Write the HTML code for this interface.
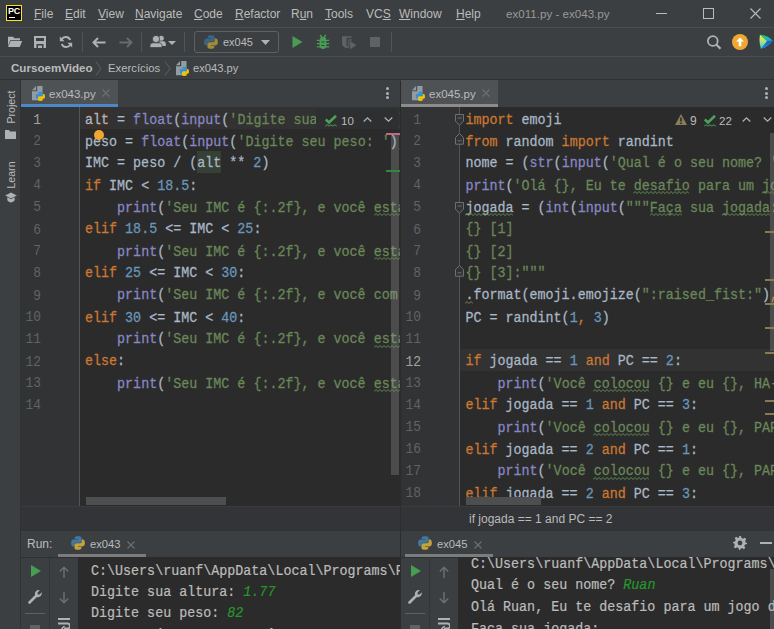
<!DOCTYPE html>
<html><head><meta charset="utf-8">
<style>
*{margin:0;padding:0;box-sizing:border-box}
html,body{width:774px;height:629px;overflow:hidden;background:#3c3f41;font-family:"Liberation Sans",sans-serif;}
.a{position:absolute}
.ui{font-family:"Liberation Sans",sans-serif;font-size:12px;color:#bbbbbb;white-space:nowrap}
.mono{-webkit-text-stroke:0.25px currentColor;font-family:"Liberation Mono",monospace;font-size:13.37px;white-space:pre;line-height:19.643px;transform:scaleY(1.12);transform-origin:0 0}
.ln{font-family:"Liberation Mono",monospace;font-size:12.9px;color:#606366;text-align:right;line-height:19.643px;transform:scaleY(1.12);transform-origin:0 0;padding-top:1.5px}
.menu{line-height:14px}.menu u{text-decoration:underline;text-underline-offset:1px}
.mono2{-webkit-text-stroke:0.2px currentColor;font-family:"Liberation Mono",monospace;font-size:13.37px;white-space:pre;color:#bbbbbb}.mono2 i{color:#26982b}
.k{color:#cc7832}.b{color:#8888c6}.s{color:#6a8759}.n{color:#6897bb}.i{color:#a9b7c6}
</style></head><body>
<!-- title bar -->
<div class="a" style="left:0;top:0;width:774px;height:27px;background:#3c3f41"></div>
<div class="a" style="left:6px;top:5px;width:16px;height:16px;background:#000;border:1px solid #f5e52b"></div>
<div class="a" style="left:8px;top:6px;font:bold 9px 'Liberation Sans';color:#fff;letter-spacing:-0.3px">PC</div>
<div class="a" style="left:9px;top:17px;width:6px;height:1px;background:#fff"></div>
<div class="a ui menu" style="top:7px;left:34px"><u>F</u>ile</div>
<div class="a ui menu" style="top:7px;left:65px"><u>E</u>dit</div>
<div class="a ui menu" style="top:7px;left:98px"><u>V</u>iew</div>
<div class="a ui menu" style="top:7px;left:135px"><u>N</u>avigate</div>
<div class="a ui menu" style="top:7px;left:194px"><u>C</u>ode</div>
<div class="a ui menu" style="top:7px;left:235px"><u>R</u>efactor</div>
<div class="a ui menu" style="top:7px;left:291px">R<u>u</u>n</div>
<div class="a ui menu" style="top:7px;left:325px"><u>T</u>ools</div>
<div class="a ui menu" style="top:7px;left:366px">VC<u>S</u></div>
<div class="a ui menu" style="top:7px;left:399px"><u>W</u>indow</div>
<div class="a ui menu" style="top:7px;left:456px"><u>H</u>elp</div>
<div class="a ui" style="top:7px;left:506px;color:#999999;font-size:11.6px">ex011.py - ex043.py</div>
<div class="a" style="left:656px;top:13px;width:11px;height:1px;background:#bbbbbb"></div>
<div class="a" style="left:703px;top:8px;width:11px;height:11px;border:1px solid #bbbbbb"></div>
<svg class="a" style="left:750px;top:8px" width="11" height="11"><path d="M0.5 0.5L10.5 10.5M10.5 0.5L0.5 10.5" stroke="#bbbbbb" stroke-width="1.1"/></svg>
<div class="a" style="left:0;top:27px;width:774px;height:1px;background:#4b4d4f"></div>
<!-- toolbar -->
<svg class="a" style="left:8px;top:36px" width="15" height="12" viewBox="0 0 15 12"><path d="M0 0.7H5L6.5 2.3H12V4.3H2.3L0 10Z" fill="#afb1b3"/><path d="M2.6 4.9H14.2L11.7 11H0Z" fill="#afb1b3"/></svg>
<svg class="a" style="left:34px;top:36px" width="12" height="12" viewBox="0 0 12 12"><path fill-rule="evenodd" d="M0 0H12V12H0ZM2 2V5H10V2ZM2.5 8V12H4V9.5H8V12H9.5V8Z" fill="#afb1b3"/></svg>
<svg class="a" style="left:59px;top:35px" width="14" height="14" viewBox="0 0 14 14"><path d="M11.2 5A4.8 4.8 0 0 0 2.6 4.2" fill="none" stroke="#afb1b3" stroke-width="2"/><path d="M2.8 9A4.8 4.8 0 0 0 11.4 9.8" fill="none" stroke="#afb1b3" stroke-width="2"/><path d="M0.8 1.5V6.3H5.6Z" fill="#afb1b3"/><path d="M13.2 12.5V7.7H8.4Z" fill="#afb1b3"/></svg>
<div class="a" style="left:82px;top:32px;width:1px;height:20px;background:#515354"></div>
<svg class="a" style="left:92px;top:37px" width="14" height="11" viewBox="0 0 14 11"><path d="M13.5 5.5H2M6 1L1.5 5.5L6 10" fill="none" stroke="#afb1b3" stroke-width="2"/></svg>
<svg class="a" style="left:119px;top:37px" width="14" height="11" viewBox="0 0 14 11"><path d="M0.5 5.5H12M8 1L12.5 5.5L8 10" fill="none" stroke="#686a6c" stroke-width="2"/></svg>
<div class="a" style="left:141px;top:32px;width:1px;height:20px;background:#515354"></div>
<svg class="a" style="left:150px;top:35px" width="16" height="13" viewBox="0 0 16 13"><circle cx="11.3" cy="3.3" r="2.5" fill="#afb1b3"/><path d="M9 6.3H13.5C15 6.3 15.8 7.6 15.8 9V11H11Z" fill="#afb1b3"/><circle cx="6" cy="4" r="3.6" fill="#afb1b3" stroke="#3c3f41" stroke-width="0.8"/><path d="M0 12.6V10.6C0 9 1.3 7.8 3 7.8H9C10.7 7.8 12 9 12 10.6V12.6Z" fill="#afb1b3" stroke="#3c3f41" stroke-width="0.8"/></svg>
<svg class="a" style="left:168px;top:41px" width="8" height="4" viewBox="0 0 8 4"><path d="M0 0H8L4 4Z" fill="#afb1b3"/></svg>
<div class="a" style="left:184px;top:32px;width:1px;height:20px;background:#515354"></div>
<div class="a" style="left:194px;top:31px;width:85px;height:22px;border:1px solid #5e6163;border-radius:3px"></div>
<svg class="a" style="left:203px;top:34px" width="16" height="16" viewBox="0 0 14 14"><path d="M7 1C4 1 4.2 2.3 4.2 2.3V3.6H7.1V4H3C3 4 1 3.8 1 6.9S2.7 10 2.7 10H3.8V8.5S3.7 6.8 5.5 6.8H8.5S10.2 6.8 10.2 5.2V2.6S10.4 1 7 1Z" fill="#3b6683"/><path d="M7.1 13C10.1 13 9.9 11.7 9.9 11.7V10.4H7V10H11.1C11.1 10 13 10.2 13 7.1S11.4 4 11.4 4H10.3V5.5S10.4 7.2 8.6 7.2H5.6S3.9 7.2 3.9 8.8V11.4S3.7 13 7.1 13Z" fill="#a18a3c"/></svg>
<div class="a ui" style="left:223px;top:35px;font-size:11px;line-height:14px">ex045</div>
<svg class="a" style="left:261px;top:40px" width="9" height="5" viewBox="0 0 9 5"><path d="M0 0H9L4.5 5Z" fill="#afb1b3"/></svg>
<svg class="a" style="left:292px;top:36px" width="11" height="12" viewBox="0 0 11 12"><path d="M0.5 0V12L10.5 6Z" fill="#499c54"/></svg>
<svg class="a" style="left:316px;top:34px" width="14" height="16" viewBox="0 0 14 16"><path d="M4.2 1L6.3 4M9.8 1L7.7 4" stroke="#499c54" stroke-width="1.4"/><ellipse cx="7" cy="5" rx="3" ry="1.9" fill="#499c54"/><path fill="#499c54" fill-rule="evenodd" d="M3.6 5.8H10.4V11.5C10.4 13.8 9 15 7 15S3.6 13.8 3.6 11.5ZM5.4 7.6V8.6H8.6V7.6ZM5.4 10.9V11.9H8.6V10.9Z"/><path d="M0.8 6.3H13.2M0.8 9.7H13.2M0.8 12.8H13.2" stroke="#499c54" stroke-width="1.3"/></svg>
<svg class="a" style="left:341px;top:36px" width="16" height="14" viewBox="0 0 16 14"><path d="M1 0.2H10.5V7.5C10.5 10 8.5 11.5 6 12.2C3 11.5 1 10 1 7.5Z" fill="#5f6163"/><path d="M5.6 1.8H10.5V3.2H7.2V10.2H5.6Z" fill="#3c3f41"/><path d="M8.6 4.4L16 9.2L8.6 14Z" fill="#5f6163" stroke="#3c3f41" stroke-width="0.7"/></svg>
<div class="a" style="left:370px;top:37px;width:10px;height:10px;background:#5f6163"></div>
<div class="a" style="left:391px;top:32px;width:1px;height:20px;background:#515354"></div>
<svg class="a" style="left:705px;top:34px" width="17" height="16" viewBox="0 0 17 16"><circle cx="7.8" cy="7" r="4.9" fill="none" stroke="#afb1b3" stroke-width="1.8"/><path d="M11.3 10.5L15.5 14.7" stroke="#afb1b3" stroke-width="2.2"/></svg>
<svg class="a" style="left:732px;top:34px" width="16" height="16" viewBox="0 0 16 16"><circle cx="8" cy="8" r="8" fill="#f0a732"/><path d="M8 3.5L12 7.5H9.3V12.3H6.7V7.5H4Z" fill="#fff"/></svg>
<svg class="a" style="left:758px;top:34px" width="16" height="16" viewBox="0 0 16 16"><defs><linearGradient id="gL" x1="0" y1="0" x2="0" y2="1"><stop offset="0" stop-color="#f2f23c"/><stop offset="0.55" stop-color="#9ee08a"/><stop offset="1" stop-color="#1ccfe8"/></linearGradient><linearGradient id="gT" x1="0" y1="0" x2="1" y2="1"><stop offset="0" stop-color="#2fd36a"/><stop offset="1" stop-color="#17a5e6"/></linearGradient><linearGradient id="gB" x1="0" y1="0" x2="0" y2="1"><stop offset="0" stop-color="#1d5fc8"/><stop offset="1" stop-color="#1d8fe0"/></linearGradient></defs><path d="M2 0.8L9.2 7L3 14.9Q0.6 8 2 0.8Z" fill="url(#gL)"/><path d="M2 0.8Q10 1.8 15 6.7L9.2 7Z" fill="url(#gT)"/><path d="M15 6.7Q11 12.5 3 14.9L9.2 7Z" fill="url(#gB)"/></svg>
<!-- nav bar -->
<div class="a ui" style="left:11px;top:61px;font-weight:bold;font-size:11.6px;line-height:14px;color:#bbbbbb">CursoemVideo</div>
<svg class="a" style="left:95px;top:61px" width="7" height="15" viewBox="0 0 7 15"><path d="M0.8 0.5L6 7.5L0.8 14.5" fill="none" stroke="#5e6163" stroke-width="1"/></svg>
<div class="a ui" style="left:108px;top:61px;font-size:11.3px;line-height:14px">Exercícios</div>
<svg class="a" style="left:164px;top:61px" width="7" height="15" viewBox="0 0 7 15"><path d="M0.8 0.5L6 7.5L0.8 14.5" fill="none" stroke="#5e6163" stroke-width="1"/></svg>
<svg class="a" style="left:176px;top:61px" width="16" height="16" viewBox="0 0 16 16"><path d="M0 4.2L4 0V4.2Z" fill="#919ca4"/><path d="M5.2 0H10.5V14.2H0V5.3H5.2Z" fill="#919ca4"/><g transform="translate(3.03 5.03) scale(0.767)"><path d="M7 1C4 1 4.2 2.3 4.2 2.3V3.6H7.1V4H3C3 4 1 3.8 1 6.9S2.7 10 2.7 10H3.8V8.5S3.7 6.8 5.5 6.8H8.5S10.2 6.8 10.2 5.2V2.6S10.4 1 7 1Z" fill="#3592d0"/><path d="M7.1 13C10.1 13 9.9 11.7 9.9 11.7V10.4H7V10H11.1C11.1 10 13 10.2 13 7.1S11.4 4 11.4 4H10.3V5.5S10.4 7.2 8.6 7.2H5.6S3.9 7.2 3.9 8.8V11.4S3.7 13 7.1 13Z" fill="#f3c300"/></g></svg>
<div class="a ui" style="left:193px;top:61px;font-size:11.2px;line-height:14px">ex043.py</div>
<div class="a" style="left:0;top:56px;width:774px;height:1px;background:#4b4d4f"></div>
<!-- nav bar -->
<div class="a" style="left:0;top:79px;width:774px;height:1px;background:#2f3133"></div>
<!-- left strip -->
<div class="a" style="left:20px;top:81px;width:1px;height:548px;background:#323232"></div>
<!-- left editor tabs -->
<div class="a" style="left:21px;top:80px;width:97px;height:26px;background:#4e5254"></div>
<div class="a" style="left:21px;top:104px;width:97px;height:3px;background:#4a88c7"></div>
<!-- left editor -->
<div class="a" style="left:21px;top:107px;width:379px;height:399px;background:#2b2b2b"></div>
<div class="a" style="left:21px;top:107px;width:58px;height:399px;background:#313335"></div>
<div class="a" style="left:79px;top:107px;width:1px;height:399px;background:#555555"></div>
<div class="a" style="left:80px;top:107px;width:320px;height:22px;background:#323232"></div>
<!-- divider -->
<div class="a" style="left:400px;top:81px;width:1px;height:449px;background:#2b2b2b"></div>
<!-- right editor tabs -->
<div class="a" style="left:401px;top:80px;width:97px;height:26px;background:#4e5254"></div>
<div class="a" style="left:401px;top:104px;width:97px;height:3px;background:#8c8c8c"></div>
<!-- right editor -->
<div class="a" style="left:401px;top:107px;width:373px;height:399px;background:#2b2b2b"></div>
<div class="a" style="left:401px;top:107px;width:58px;height:399px;background:#313335"></div>
<div class="a" style="left:459px;top:107px;width:1px;height:399px;background:#555555"></div>
<div class="a" style="left:460px;top:349px;width:314px;height:22px;background:#323232"></div>
<!-- status strip -->
<div class="a" style="left:21px;top:506px;width:753px;height:24px;background:#323437"></div>
<div class="a" style="left:21px;top:506px;width:753px;height:1px;background:#393b3d"></div>
<div class="a" style="left:400px;top:506px;width:1px;height:24px;background:#2b2d2f"></div>
<!-- run panel -->
<div class="a" style="left:21px;top:530px;width:753px;height:1px;background:#323232"></div>
<div class="a" style="left:78px;top:557px;width:322px;height:72px;background:#2b2b2b"></div>
<div class="a" style="left:458px;top:557px;width:316px;height:72px;background:#2b2b2b"></div>
<div class="a" style="left:400px;top:530px;width:1px;height:99px;background:#2b2d2f"></div>
<!-- code -->
<div class="a" style="left:21px;top:107px;width:20px;height:399px"><div class="ln">
<div style="color:#a4a3a3">1</div><div>2</div><div>3</div><div>4</div><div>5</div><div>6</div><div>7</div><div>8</div><div>9</div><div>10</div><div>11</div><div>12</div><div>13</div><div>14</div></div></div>
<div class="a" style="left:80px;top:107px;width:320px;height:399px;overflow:hidden">
<div class="a" style="left:85px;top:0;width:4px;height:22px;background:#3b3029;left:5px;width:24px"></div>
<div class="a" style="left:117px;top:44px;width:24px;height:22px;background:#344134"></div>
<div class="a mono" style="left:5px;top:1.5px"><span class="i">alt = </span><span class="b">float</span><span class="i">(</span><span class="b">input</span><span class="i">(</span><span class="s">&#x27;Digite sua altura: &#x27;</span><span class="i">))</span>
<span class="i">peso = </span><span class="b">float</span><span class="i">(</span><span class="b">input</span><span class="i">(</span><span class="s">&#x27;Digite seu peso: &#x27;</span><span class="i">))</span>
<span class="i">IMC = peso / (alt ** </span><span class="n">2</span><span class="i">)</span>
<span class="k">if </span><span class="i">IMC &lt; </span><span class="n">18.5</span><span class="i">:</span>
<span class="i">    </span><span class="b">print</span><span class="i">(</span><span class="s">&#x27;Seu IMC é {:.2f}, e você esta abaixo do peso&#x27;</span><span class="i">)</span>
<span class="k">elif </span><span class="n">18.5</span><span class="i"> &lt;= IMC &lt; </span><span class="n">25</span><span class="i">:</span>
<span class="i">    </span><span class="b">print</span><span class="i">(</span><span class="s">&#x27;Seu IMC é {:.2f}, e você esta no peso ideal&#x27;</span><span class="i">)</span>
<span class="k">elif </span><span class="n">25</span><span class="i"> &lt;= IMC &lt; </span><span class="n">30</span><span class="i">:</span>
<span class="i">    </span><span class="b">print</span><span class="i">(</span><span class="s">&#x27;Seu IMC é {:.2f}, e você com sobrepeso&#x27;</span><span class="i">)</span>
<span class="k">elif </span><span class="n">30</span><span class="i"> &lt;= IMC &lt; </span><span class="n">40</span><span class="i">:</span>
<span class="i">    </span><span class="b">print</span><span class="i">(</span><span class="s">&#x27;Seu IMC é {:.2f}, e você esta obeso&#x27;</span><span class="i">)</span>
<span class="k">else</span><span class="i">:</span>
<span class="i">    </span><span class="b">print</span><span class="i">(</span><span class="s">&#x27;Seu IMC é {:.2f}, e você esta com obesidade&#x27;</span><span class="i">)</span>
</div></div>
<div class="a" style="left:401px;top:107px;width:20px;height:399px"><div class="ln">
<div>1</div><div>2</div><div>3</div><div>4</div><div>5</div><div>6</div><div>7</div><div>8</div><div>9</div><div>10</div><div>11</div><div style="color:#a4a3a3">12</div><div>13</div><div>14</div><div>15</div><div>16</div><div>17</div><div>18</div></div></div>
<div class="a" style="left:460px;top:107px;width:314px;height:399px;overflow:hidden">
<div class="a mono" style="left:5.4px;top:1.5px"><span class="k">import </span><span class="i">emoji</span>
<span class="k">from </span><span class="i">random </span><span class="k">import </span><span class="i">randint</span>
<span class="i">nome = (</span><span class="b">str</span><span class="i">(</span><span class="b">input</span><span class="i">(</span><span class="s">&#x27;Qual é o seu nome? &#x27;</span><span class="i">)))</span>
<span class="b">print</span><span class="i">(</span><span class="s">&#x27;Olá {}, Eu te desafio para um jogo&#x27;</span><span class="i">)</span>
<span class="i">jogada = (</span><span class="b">int</span><span class="i">(</span><span class="b">input</span><span class="i">(</span><span class="s">&quot;&quot;&quot;Faça sua jogada:</span>
<span class="s">{} [1]</span>
<span class="s">{} [2]</span>
<span class="s">{} [3]:&quot;&quot;&quot;</span>
<span class="i">.format(emoji.emojize(</span><span class="s">&quot;:raised_fist:&quot;</span><span class="i">)</span><span class="k">,</span><span class="i"> emoji</span>
<span class="i">PC = randint(</span><span class="n">1</span><span class="k">,</span><span class="i"> </span><span class="n">3</span><span class="i">)</span>

<span class="k">if </span><span class="i">jogada == </span><span class="n">1</span><span class="k"> and </span><span class="i">PC == </span><span class="n">2</span><span class="i">:</span>
<span class="i">    </span><span class="b">print</span><span class="i">(</span><span class="s">&#x27;Você colocou {} e eu {}, HA-HA&#x27;</span><span class="i">)</span>
<span class="k">elif </span><span class="i">jogada == </span><span class="n">1</span><span class="k"> and </span><span class="i">PC == </span><span class="n">3</span><span class="i">:</span>
<span class="i">    </span><span class="b">print</span><span class="i">(</span><span class="s">&#x27;Você colocou {} e eu {}, PAREDE&#x27;</span><span class="i">)</span>
<span class="k">elif </span><span class="i">jogada == </span><span class="n">2</span><span class="k"> and </span><span class="i">PC == </span><span class="n">1</span><span class="i">:</span>
<span class="i">    </span><span class="b">print</span><span class="i">(</span><span class="s">&#x27;Você colocou {} e eu {}, PAREDE&#x27;</span><span class="i">)</span>
<span class="k">elif </span><span class="i">jogada == </span><span class="n">2</span><span class="k"> and </span><span class="i">PC == </span><span class="n">3</span><span class="i">:</span></div></div>
<div class="a ui" style="left:-6px;top:101px;width:34px;text-align:center;font-size:10.6px;line-height:12px;transform:rotate(-90deg)">Project</div>
<svg class="a" style="left:5px;top:130px" width="11" height="9" viewBox="0 0 11 9"><path d="M0 0H4L5 1.5H11V9H0Z" fill="#afb1b3"/></svg>
<div class="a ui" style="left:-6px;top:168.5px;width:34px;text-align:center;font-size:10.6px;line-height:12px;transform:rotate(-90deg)">Learn</div>
<svg class="a" style="left:5px;top:192px" width="12" height="11" viewBox="0 0 12 11"><path d="M6 0.5L11.8 3.5L6 6.5L0.2 3.5Z" fill="#afb1b3"/><path d="M2.3 5.2V8C2.3 8 3.6 10.5 6 10.5S9.7 8 9.7 8V5.2L6 7.2Z" fill="#afb1b3"/></svg>
<svg class="a" style="left:32px;top:86px" width="16" height="16" viewBox="0 0 16 16"><path d="M0 4.2L4 0V4.2Z" fill="#919ca4"/><path d="M5.2 0H10.5V14.2H0V5.3H5.2Z" fill="#919ca4"/><g transform="translate(3.03 5.03) scale(0.767)"><path d="M7 1C4 1 4.2 2.3 4.2 2.3V3.6H7.1V4H3C3 4 1 3.8 1 6.9S2.7 10 2.7 10H3.8V8.5S3.7 6.8 5.5 6.8H8.5S10.2 6.8 10.2 5.2V2.6S10.4 1 7 1Z" fill="#3592d0"/><path d="M7.1 13C10.1 13 9.9 11.7 9.9 11.7V10.4H7V10H11.1C11.1 10 13 10.2 13 7.1S11.4 4 11.4 4H10.3V5.5S10.4 7.2 8.6 7.2H5.6S3.9 7.2 3.9 8.8V11.4S3.7 13 7.1 13Z" fill="#f3c300"/></g></svg>
<div class="a ui" style="left:49px;top:87px;font-size:11.5px;line-height:14px;color:#bbbbbb">ex043.py</div>
<svg class="a" style="left:102px;top:89px" width="8" height="8" viewBox="0 0 8 8"><path d="M0.5 0.5L7.5 7.5M7.5 0.5L0.5 7.5" stroke="#6e7173" stroke-width="1.1"/></svg>
<div class="a" style="left:386px;top:87.0px;width:3px;height:3px;border-radius:50%;background:#afb1b3"></div><div class="a" style="left:386px;top:91.5px;width:3px;height:3px;border-radius:50%;background:#afb1b3"></div><div class="a" style="left:386px;top:96.0px;width:3px;height:3px;border-radius:50%;background:#afb1b3"></div>
<svg class="a" style="left:412px;top:86px" width="16" height="16" viewBox="0 0 16 16"><path d="M0 4.2L4 0V4.2Z" fill="#919ca4"/><path d="M5.2 0H10.5V14.2H0V5.3H5.2Z" fill="#919ca4"/><g transform="translate(3.03 5.03) scale(0.767)"><path d="M7 1C4 1 4.2 2.3 4.2 2.3V3.6H7.1V4H3C3 4 1 3.8 1 6.9S2.7 10 2.7 10H3.8V8.5S3.7 6.8 5.5 6.8H8.5S10.2 6.8 10.2 5.2V2.6S10.4 1 7 1Z" fill="#3592d0"/><path d="M7.1 13C10.1 13 9.9 11.7 9.9 11.7V10.4H7V10H11.1C11.1 10 13 10.2 13 7.1S11.4 4 11.4 4H10.3V5.5S10.4 7.2 8.6 7.2H5.6S3.9 7.2 3.9 8.8V11.4S3.7 13 7.1 13Z" fill="#f3c300"/></g></svg>
<div class="a ui" style="left:429px;top:87px;font-size:11.5px;line-height:14px;color:#bbbbbb">ex045.py</div>
<svg class="a" style="left:482px;top:89px" width="8" height="8" viewBox="0 0 8 8"><path d="M0.5 0.5L7.5 7.5M7.5 0.5L0.5 7.5" stroke="#6e7173" stroke-width="1.1"/></svg>
<div class="a" style="left:765px;top:87.0px;width:3px;height:3px;border-radius:50%;background:#afb1b3"></div><div class="a" style="left:765px;top:91.5px;width:3px;height:3px;border-radius:50%;background:#afb1b3"></div><div class="a" style="left:765px;top:96.0px;width:3px;height:3px;border-radius:50%;background:#afb1b3"></div>
<div class="a" style="left:316px;top:109px;width:82px;height:20px;background:#2e2f30;border-radius:4px"></div>
<svg class="a" style="left:325px;top:115px" width="12" height="13" viewBox="0 0 12 13"><path d="M0.8 4.5L4 7.5L11 0.8" fill="none" stroke="#4fa05a" stroke-width="2.6"/><path d="M0.3 11.2L2.2 9.7L4.1 11.2L6 9.7L7.9 11.2L9.8 9.7L11.7 11.2" fill="none" stroke="#4fa05a" stroke-width="1"/></svg>
<div class="a ui" style="left:341px;top:114px;font-size:11.5px;line-height:14px;color:#bbbbbb">10</div>
<svg class="a" style="left:363px;top:117px" width="9" height="5" viewBox="0 0 9 5"><path d="M0.7 4.5L4.5 0.9L8.3 4.5" fill="none" stroke="#afb1b3" stroke-width="1.3"/></svg>
<svg class="a" style="left:384px;top:117px" width="9" height="5" viewBox="0 0 9 5"><path d="M0.7 0.5L4.5 4.1L8.3 0.5" fill="none" stroke="#afb1b3" stroke-width="1.3"/></svg>
<div class="a" style="left:391px;top:133px;width:8px;height:342px;background:rgba(160,160,160,0.28)"></div>
<div class="a" style="left:386px;top:133px;width:14px;height:2px;background:#c26a7f"></div>
<div class="a" style="left:386px;top:170px;width:14px;height:2px;background:#2f8a3a"></div>
<div class="a" style="left:86px;top:497px;width:140px;height:8px;background:#4c4e50"></div>
<div class="a" style="left:94px;top:129.5px;width:10px;height:10px;border-radius:50%;background:#f0a732"></div>
<svg class="a" style="left:675px;top:114px" width="12" height="11" viewBox="0 0 12 11"><path d="M6 0L12 11H0Z" fill="#8a7d5c"/><path d="M5.2 3.5H6.8V7.5H5.2ZM5.2 8.5H6.8V10H5.2Z" fill="#2b2b2b"/></svg>
<div class="a ui" style="left:690px;top:114px;font-size:12px;line-height:14px;color:#bbbbbb">9</div>
<svg class="a" style="left:704px;top:115px" width="12" height="13" viewBox="0 0 12 13"><path d="M0.8 4.5L4 7.5L11 0.8" fill="none" stroke="#4fa05a" stroke-width="2.6"/><path d="M0.3 11.2L2.2 9.7L4.1 11.2L6 9.7L7.9 11.2L9.8 9.7L11.7 11.2" fill="none" stroke="#4fa05a" stroke-width="1"/></svg>
<div class="a ui" style="left:719px;top:114px;font-size:11.5px;line-height:14px;color:#bbbbbb">22</div>
<svg class="a" style="left:742px;top:117px" width="9" height="5" viewBox="0 0 9 5"><path d="M0.7 4.5L4.5 0.9L8.3 4.5" fill="none" stroke="#afb1b3" stroke-width="1.3"/></svg>
<svg class="a" style="left:763px;top:117px" width="9" height="5" viewBox="0 0 9 5"><path d="M0.7 0.5L4.5 4.1L8.3 0.5" fill="none" stroke="#afb1b3" stroke-width="1.3"/></svg>
<div class="a" style="left:770px;top:133px;width:4px;height:218px;background:rgba(160,160,160,0.28)"></div>
<div class="a" style="left:765px;top:231px;width:9px;height:2px;background:#8a7a52"></div>
<div class="a" style="left:765px;top:279px;width:9px;height:2px;background:#8a7a52"></div>
<div class="a" style="left:765px;top:303px;width:9px;height:2px;background:#8a7a52"></div>
<div class="a" style="left:765px;top:327px;width:9px;height:2px;background:#8a7a52"></div>
<div class="a" style="left:765px;top:352px;width:9px;height:2px;background:#8a7a52"></div>
<div class="a" style="left:765px;top:400px;width:9px;height:2px;background:#8a7a52"></div>
<div class="a" style="left:765px;top:413px;width:9px;height:2px;background:#8a7a52"></div>
<div class="a" style="left:466px;top:497px;width:75px;height:8px;background:#4c4e50"></div>
<svg class="a" style="left:455px;top:114px" width="9" height="12" viewBox="0 0 9 12"><path d="M0.5 0.5H8.5V7.2L4.5 11.2L0.5 7.2Z" fill="#313335" stroke="#6e7173" stroke-width="1"/><path d="M2.5 4H6.5" stroke="#6e7173"/></svg>
<svg class="a" style="left:455px;top:133px" width="9" height="12" viewBox="0 0 9 12"><path d="M0.5 11.2H8.5V4.5L4.5 0.5L0.5 4.5Z" fill="#313335" stroke="#6e7173" stroke-width="1"/><path d="M2.5 7.8H6.5" stroke="#6e7173"/></svg>
<svg class="a" style="left:455px;top:202px" width="9" height="12" viewBox="0 0 9 12"><path d="M0.5 0.5H8.5V7.2L4.5 11.2L0.5 7.2Z" fill="#313335" stroke="#6e7173" stroke-width="1"/><path d="M2.5 4H6.5" stroke="#6e7173"/></svg>
<svg class="a" style="left:455px;top:265px" width="9" height="12" viewBox="0 0 9 12"><path d="M0.5 11.2H8.5V4.5L4.5 0.5L0.5 4.5Z" fill="#313335" stroke="#6e7173" stroke-width="1"/><path d="M2.5 7.8H6.5" stroke="#6e7173"/></svg>
<svg class="a" style="left:373.9px;top:213px" width="26" height="4" viewBox="0 0 26 4"><path d="M0.0 2.6 L2.0 0.5 L4.0 2.6 L6.0 0.5 L8.0 2.6 L10.0 0.5 L12.0 2.6 L14.0 0.5 L16.0 2.6 L18.0 0.5 L20.0 2.6 L22.0 0.5 L24.0 2.6 L26.0 0.5" fill="none" stroke="#5f8a52" stroke-width="1"/></svg>
<svg class="a" style="left:373.9px;top:257px" width="26" height="4" viewBox="0 0 26 4"><path d="M0.0 2.6 L2.0 0.5 L4.0 2.6 L6.0 0.5 L8.0 2.6 L10.0 0.5 L12.0 2.6 L14.0 0.5 L16.0 2.6 L18.0 0.5 L20.0 2.6 L22.0 0.5 L24.0 2.6 L26.0 0.5" fill="none" stroke="#5f8a52" stroke-width="1"/></svg>
<svg class="a" style="left:373.9px;top:345px" width="26" height="4" viewBox="0 0 26 4"><path d="M0.0 2.6 L2.0 0.5 L4.0 2.6 L6.0 0.5 L8.0 2.6 L10.0 0.5 L12.0 2.6 L14.0 0.5 L16.0 2.6 L18.0 0.5 L20.0 2.6 L22.0 0.5 L24.0 2.6 L26.0 0.5" fill="none" stroke="#5f8a52" stroke-width="1"/></svg>
<svg class="a" style="left:373.9px;top:389px" width="26" height="4" viewBox="0 0 26 4"><path d="M0.0 2.6 L2.0 0.5 L4.0 2.6 L6.0 0.5 L8.0 2.6 L10.0 0.5 L12.0 2.6 L14.0 0.5 L16.0 2.6 L18.0 0.5 L20.0 2.6 L22.0 0.5 L24.0 2.6 L26.0 0.5" fill="none" stroke="#5f8a52" stroke-width="1"/></svg>
<svg class="a" style="left:633.4px;top:191px" width="56" height="4" viewBox="0 0 56 4"><path d="M0.0 2.6 L2.0 0.5 L4.0 2.6 L6.0 0.5 L8.0 2.6 L10.0 0.5 L12.0 2.6 L14.0 0.5 L16.0 2.6 L18.0 0.5 L20.0 2.6 L22.0 0.5 L24.0 2.6 L26.0 0.5 L28.0 2.6 L30.0 0.5 L32.0 2.6 L34.0 0.5 L36.0 2.6 L38.0 0.5 L40.0 2.6 L42.0 0.5 L44.0 2.6 L46.0 0.5 L48.0 2.6 L50.0 0.5 L52.0 2.6 L54.0 0.5 L56.0 2.6" fill="none" stroke="#5f8a52" stroke-width="1"/></svg>
<svg class="a" style="left:761.7px;top:191px" width="32" height="4" viewBox="0 0 32 4"><path d="M0.0 2.6 L2.0 0.5 L4.0 2.6 L6.0 0.5 L8.0 2.6 L10.0 0.5 L12.0 2.6 L14.0 0.5 L16.0 2.6 L18.0 0.5 L20.0 2.6 L22.0 0.5 L24.0 2.6 L26.0 0.5 L28.0 2.6 L30.0 0.5 L32.0 2.6" fill="none" stroke="#5f8a52" stroke-width="1"/></svg>
<svg class="a" style="left:465.0px;top:213px" width="48" height="4" viewBox="0 0 48 4"><path d="M0.0 2.6 L2.0 0.5 L4.0 2.6 L6.0 0.5 L8.0 2.6 L10.0 0.5 L12.0 2.6 L14.0 0.5 L16.0 2.6 L18.0 0.5 L20.0 2.6 L22.0 0.5 L24.0 2.6 L26.0 0.5 L28.0 2.6 L30.0 0.5 L32.0 2.6 L34.0 0.5 L36.0 2.6 L38.0 0.5 L40.0 2.6 L42.0 0.5 L44.0 2.6 L46.0 0.5 L48.0 2.6" fill="none" stroke="#5f8a52" stroke-width="1"/></svg>
<svg class="a" style="left:649.5px;top:213px" width="32" height="4" viewBox="0 0 32 4"><path d="M0.0 2.6 L2.0 0.5 L4.0 2.6 L6.0 0.5 L8.0 2.6 L10.0 0.5 L12.0 2.6 L14.0 0.5 L16.0 2.6 L18.0 0.5 L20.0 2.6 L22.0 0.5 L24.0 2.6 L26.0 0.5 L28.0 2.6 L30.0 0.5 L32.0 2.6" fill="none" stroke="#5f8a52" stroke-width="1"/></svg>
<svg class="a" style="left:721.6px;top:213px" width="48" height="4" viewBox="0 0 48 4"><path d="M0.0 2.6 L2.0 0.5 L4.0 2.6 L6.0 0.5 L8.0 2.6 L10.0 0.5 L12.0 2.6 L14.0 0.5 L16.0 2.6 L18.0 0.5 L20.0 2.6 L22.0 0.5 L24.0 2.6 L26.0 0.5 L28.0 2.6 L30.0 0.5 L32.0 2.6 L34.0 0.5 L36.0 2.6 L38.0 0.5 L40.0 2.6 L42.0 0.5 L44.0 2.6 L46.0 0.5 L48.0 2.6" fill="none" stroke="#5f8a52" stroke-width="1"/></svg>
<svg class="a" style="left:465.0px;top:301px" width="8" height="4" viewBox="0 0 8 4"><path d="M0.0 2.6 L2.0 0.5 L4.0 2.6 L6.0 0.5 L8.0 2.6" fill="none" stroke="#8a7a52" stroke-width="1"/></svg>
<svg class="a" style="left:593.3px;top:389px" width="56" height="4" viewBox="0 0 56 4"><path d="M0.0 2.6 L2.0 0.5 L4.0 2.6 L6.0 0.5 L8.0 2.6 L10.0 0.5 L12.0 2.6 L14.0 0.5 L16.0 2.6 L18.0 0.5 L20.0 2.6 L22.0 0.5 L24.0 2.6 L26.0 0.5 L28.0 2.6 L30.0 0.5 L32.0 2.6 L34.0 0.5 L36.0 2.6 L38.0 0.5 L40.0 2.6 L42.0 0.5 L44.0 2.6 L46.0 0.5 L48.0 2.6 L50.0 0.5 L52.0 2.6 L54.0 0.5 L56.0 2.6" fill="none" stroke="#5f8a52" stroke-width="1"/></svg>
<svg class="a" style="left:593.3px;top:433px" width="56" height="4" viewBox="0 0 56 4"><path d="M0.0 2.6 L2.0 0.5 L4.0 2.6 L6.0 0.5 L8.0 2.6 L10.0 0.5 L12.0 2.6 L14.0 0.5 L16.0 2.6 L18.0 0.5 L20.0 2.6 L22.0 0.5 L24.0 2.6 L26.0 0.5 L28.0 2.6 L30.0 0.5 L32.0 2.6 L34.0 0.5 L36.0 2.6 L38.0 0.5 L40.0 2.6 L42.0 0.5 L44.0 2.6 L46.0 0.5 L48.0 2.6 L50.0 0.5 L52.0 2.6 L54.0 0.5 L56.0 2.6" fill="none" stroke="#5f8a52" stroke-width="1"/></svg>
<svg class="a" style="left:593.3px;top:477px" width="56" height="4" viewBox="0 0 56 4"><path d="M0.0 2.6 L2.0 0.5 L4.0 2.6 L6.0 0.5 L8.0 2.6 L10.0 0.5 L12.0 2.6 L14.0 0.5 L16.0 2.6 L18.0 0.5 L20.0 2.6 L22.0 0.5 L24.0 2.6 L26.0 0.5 L28.0 2.6 L30.0 0.5 L32.0 2.6 L34.0 0.5 L36.0 2.6 L38.0 0.5 L40.0 2.6 L42.0 0.5 L44.0 2.6 L46.0 0.5 L48.0 2.6 L50.0 0.5 L52.0 2.6 L54.0 0.5 L56.0 2.6" fill="none" stroke="#5f8a52" stroke-width="1"/></svg>
<div class="a ui" style="left:469px;top:512px;font-size:12px;line-height:14px;color:#bbbbbb">if jogada == 1 and PC == 2</div>
<div class="a ui" style="left:27px;top:537px;font-size:12px;line-height:14px;color:#bbbbbb">Run:</div>
<svg class="a" style="left:70px;top:535px" width="16" height="16" viewBox="0 0 14 14"><path d="M7 1C4 1 4.2 2.3 4.2 2.3V3.6H7.1V4H3C3 4 1 3.8 1 6.9S2.7 10 2.7 10H3.8V8.5S3.7 6.8 5.5 6.8H8.5S10.2 6.8 10.2 5.2V2.6S10.4 1 7 1Z" fill="#3f79a3"/><path d="M7.1 13C10.1 13 9.9 11.7 9.9 11.7V10.4H7V10H11.1C11.1 10 13 10.2 13 7.1S11.4 4 11.4 4H10.3V5.5S10.4 7.2 8.6 7.2H5.6S3.9 7.2 3.9 8.8V11.4S3.7 13 7.1 13Z" fill="#c4a23c"/></svg>
<div class="a ui" style="left:90px;top:537px;font-size:11.2px;line-height:14px;color:#bbbbbb">ex043</div>
<svg class="a" style="left:127px;top:540.5px" width="8" height="8" viewBox="0 0 8 8"><path d="M0.5 0.5L7.5 7.5M7.5 0.5L0.5 7.5" stroke="#6e7173" stroke-width="1.1"/></svg>
<div class="a" style="left:58px;top:554px;width:88px;height:3px;background:#7a7c7e"></div>
<div class="a" style="left:49px;top:557px;width:1px;height:72px;background:#323435"></div>
<svg class="a" style="left:31px;top:565px" width="10" height="12" viewBox="0 0 10 12"><path d="M0 0V12L10 6Z" fill="#499c54"/></svg><svg class="a" style="left:28px;top:589px" width="15" height="15" viewBox="0 0 15 15"><path d="M1.5 13.5L8 7" stroke="#afb1b3" stroke-width="2.6" stroke-linecap="round"/><path d="M13.8 3.2L11.6 5.4L9.6 5.4L9.6 3.4L11.8 1.2A4 4 0 0 0 7 6.2L8.8 8A4 4 0 0 0 13.8 3.2Z" fill="#afb1b3"/></svg><div class="a" style="left:25px;top:613px;width:20px;height:1px;background:#5e6163"></div><div class="a" style="left:30px;top:625px;width:10px;height:10px;background:#5f6163"></div><svg class="a" style="left:59px;top:566px" width="10" height="12" viewBox="0 0 10 12"><path d="M5 12V1.5M0.8 5.5L5 1.3L9.2 5.5" fill="none" stroke="#6c6e70" stroke-width="1.5"/></svg><svg class="a" style="left:59px;top:592px" width="10" height="12" viewBox="0 0 10 12"><path d="M5 0V10.5M0.8 6.5L5 10.7L9.2 6.5" fill="none" stroke="#6c6e70" stroke-width="1.5"/></svg><svg class="a" style="left:58px;top:618px" width="12" height="11" viewBox="0 0 12 11"><path d="M0 1H12M0 5.5H9.5A2.5 2.5 0 0 1 9.5 10.5H6" fill="none" stroke="#afb1b3" stroke-width="1.8"/><path d="M6.5 8L4 10.5L6.5 13" fill="none" stroke="#afb1b3" stroke-width="1.5"/></svg>
<div class="a" style="left:21px;top:557px;width:57px;height:1px;background:#2e3032"></div><div class="a" style="left:401px;top:557px;width:57px;height:1px;background:#2e3032"></div>
<div class="a mono2" style="left:91px;top:557px;width:309px;height:72px;overflow:hidden"><div style="transform:scaleY(1.12);transform-origin:0 0;line-height:19.29px;padding-top:2.5px">C:\Users\ruanf\AppData\Local\Programs\Python
Digite sua altura: <i>1.77</i>
Digite seu peso: <i>82</i>
Seu IMC é 26.16, e você com sorepeso</div></div>
<svg class="a" style="left:417px;top:535px" width="16" height="16" viewBox="0 0 14 14"><path d="M7 1C4 1 4.2 2.3 4.2 2.3V3.6H7.1V4H3C3 4 1 3.8 1 6.9S2.7 10 2.7 10H3.8V8.5S3.7 6.8 5.5 6.8H8.5S10.2 6.8 10.2 5.2V2.6S10.4 1 7 1Z" fill="#3f79a3"/><path d="M7.1 13C10.1 13 9.9 11.7 9.9 11.7V10.4H7V10H11.1C11.1 10 13 10.2 13 7.1S11.4 4 11.4 4H10.3V5.5S10.4 7.2 8.6 7.2H5.6S3.9 7.2 3.9 8.8V11.4S3.7 13 7.1 13Z" fill="#c4a23c"/></svg>
<div class="a ui" style="left:437px;top:537px;font-size:11.2px;line-height:14px;color:#bbbbbb">ex045</div>
<svg class="a" style="left:474px;top:540.5px" width="8" height="8" viewBox="0 0 8 8"><path d="M0.5 0.5L7.5 7.5M7.5 0.5L0.5 7.5" stroke="#6e7173" stroke-width="1.1"/></svg>
<div class="a" style="left:405px;top:554px;width:88px;height:3px;background:#7a7c7e"></div>
<svg class="a" style="left:733px;top:536px" width="14" height="14" viewBox="0 0 14 14"><path fill="#afb1b3" fill-rule="evenodd" d="M6 0H8L8.4 2A5 5 0 0 1 10 2.8L11.8 1.7L13.2 3.1L12.1 4.9A5 5 0 0 1 12.8 6.5L14 6.9V7.1V8L12 8.4A5 5 0 0 1 11.2 10L12.3 11.8L10.9 13.2L9.1 12.1A5 5 0 0 1 7.5 12.8L7.1 14H6L5.6 12A5 5 0 0 1 4 11.2L2.2 12.3L0.8 10.9L1.9 9.1A5 5 0 0 1 1.2 7.5L0 7.1V6L2 5.6A5 5 0 0 1 2.8 4L1.7 2.2L3.1 0.8L4.9 1.9A5 5 0 0 1 6.5 1.2ZM7 4.6A2.4 2.4 0 1 0 7 9.4A2.4 2.4 0 1 0 7 4.6Z"/></svg>
<div class="a" style="left:760px;top:542px;width:12px;height:2px;background:#afb1b3"></div>
<div class="a" style="left:429px;top:557px;width:1px;height:72px;background:#323435"></div>
<svg class="a" style="left:411px;top:565px" width="10" height="12" viewBox="0 0 10 12"><path d="M0 0V12L10 6Z" fill="#499c54"/></svg><svg class="a" style="left:408px;top:589px" width="15" height="15" viewBox="0 0 15 15"><path d="M1.5 13.5L8 7" stroke="#afb1b3" stroke-width="2.6" stroke-linecap="round"/><path d="M13.8 3.2L11.6 5.4L9.6 5.4L9.6 3.4L11.8 1.2A4 4 0 0 0 7 6.2L8.8 8A4 4 0 0 0 13.8 3.2Z" fill="#afb1b3"/></svg><div class="a" style="left:405px;top:613px;width:20px;height:1px;background:#5e6163"></div><div class="a" style="left:410px;top:625px;width:10px;height:10px;background:#5f6163"></div><svg class="a" style="left:439px;top:566px" width="10" height="12" viewBox="0 0 10 12"><path d="M5 12V1.5M0.8 5.5L5 1.3L9.2 5.5" fill="none" stroke="#6c6e70" stroke-width="1.5"/></svg><svg class="a" style="left:439px;top:592px" width="10" height="12" viewBox="0 0 10 12"><path d="M5 0V10.5M0.8 6.5L5 10.7L9.2 6.5" fill="none" stroke="#6c6e70" stroke-width="1.5"/></svg><svg class="a" style="left:438px;top:618px" width="12" height="11" viewBox="0 0 12 11"><path d="M0 1H12M0 5.5H9.5A2.5 2.5 0 0 1 9.5 10.5H6" fill="none" stroke="#afb1b3" stroke-width="1.8"/><path d="M6.5 8L4 10.5L6.5 13" fill="none" stroke="#afb1b3" stroke-width="1.5"/></svg>
<div class="a mono2" style="left:471px;top:557px;width:303px;height:72px;overflow:hidden"><div style="transform:scaleY(1.12);transform-origin:0 0;line-height:19.29px;margin-top:-4px">C:\Users\ruanf\AppData\Local\Programs\Python
Qual é o seu nome? <i>Ruan</i>
Olá Ruan, Eu te desafio para um jogo de Jokenpô
Faça sua jogada:</div></div>
<div class="a" style="left:770px;top:569px;width:4px;height:60px;background:rgba(160,160,160,0.28)"></div></body></html>
